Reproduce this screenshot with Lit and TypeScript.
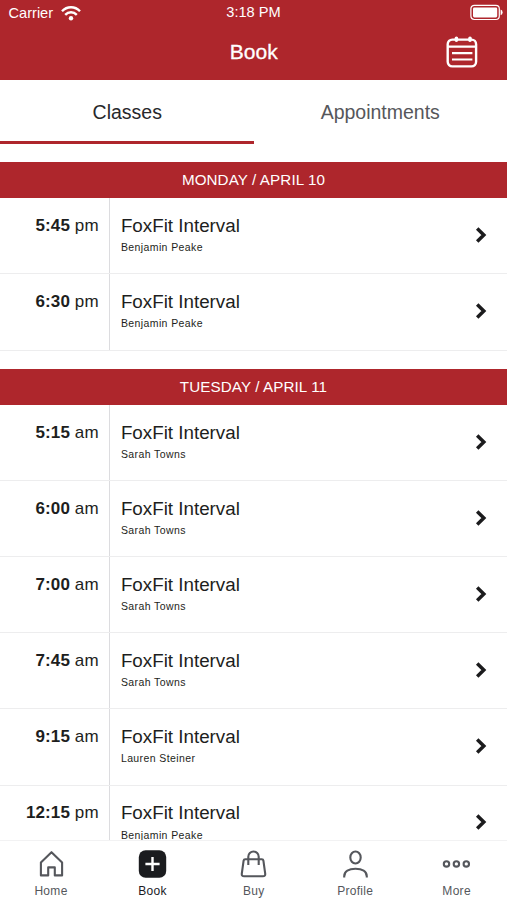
import { LitElement, html, css, svg } from "lit";
import { customElement, property } from "lit/decorators.js";
import { classMap } from "lit/directives/class-map.js";

interface Session {
  time: string;
  period: "am" | "pm";
  name: string;
  instructor: string;
}

interface Day {
  label: string;
  sessions: Session[];
}

const session = (time: string, period: "am" | "pm", instructor: string): Session => ({
  time,
  period,
  name: "FoxFit Interval",
  instructor,
});

const DAYS: Day[] = [
  {
    label: "MONDAY / APRIL 10",
    sessions: [session("5:45", "pm", "Benjamin Peake"), session("6:30", "pm", "Benjamin Peake")],
  },
  {
    label: "TUESDAY / APRIL 11",
    sessions: [
      session("5:15", "am", "Sarah Towns"),
      session("6:00", "am", "Sarah Towns"),
      session("7:00", "am", "Sarah Towns"),
      session("7:45", "am", "Sarah Towns"),
      session("9:15", "am", "Lauren Steiner"),
      session("12:15", "pm", "Benjamin Peake"),
    ],
  },
];

const NAV_ICONS = {
  Home: svg`<path d="M4.9 12.4 15.5 2.2 26.1 12.4V25.4H18.8V17.4H12.2V25.4H4.9Z"/>`,
  Book: svg`<rect x="1.8" y="0.3" width="27.4" height="27.4" rx="6.8" fill="#1b1c1f" stroke="none"/>
    <path d="M15.5 6.9V21.1M8.4 14H22.6" stroke="#fff" stroke-width="2.4"/>`,
  Buy: svg`<path d="M7.2 9.2H23.8Q25.2 9.2 25.4 10.6L27.2 23.6Q27.5 26.3 24.9 26.3H6.1Q3.5 26.3 3.8 23.6L5.6 10.6Q5.8 9.2 7.2 9.2Z"/>
    <path d="M10.3 15V6.7a5.2 5.2 0 0 1 10.4 0V15"/>`,
  Profile: svg`<ellipse cx="15.5" cy="7.5" rx="5.2" ry="6"/>
    <path d="M4.2 27.4V26.4C4.2 21.4 8.9 18.8 15.5 18.8S26.8 21.4 26.8 26.4V27.4"/>`,
  More: svg`<circle cx="5.5" cy="13.9" r="2.7"/><circle cx="15.4" cy="13.9" r="2.7"/><circle cx="25.3" cy="13.9" r="2.7"/>`,
};

type NavName = keyof typeof NAV_ICONS;

@customElement("session-row")
class SessionRow extends LitElement {
  @property({ attribute: false }) session!: Session;

  static styles = css`
    :host {
      display: flex;
      box-sizing: border-box;
      height: 76.15px;
      border-bottom: 1px solid #ededee;
      color: #1d1e20;
    }
    .time {
      box-sizing: border-box;
      width: 110px;
      padding: 16.8px 10.3px 0 0;
      border-right: 1px solid #dcdcdf;
      text-align: right;
      font-size: 17px;
      line-height: 22px;
      letter-spacing: 0.12px;
      white-space: nowrap;
    }
    .details {
      flex: 1;
      padding: 16.8px 0 0 10.9px;
    }
    .name {
      font-size: 18.8px;
      line-height: 22px;
    }
    .instructor {
      margin-top: 4.2px;
      font-size: 10.5px;
      line-height: 13px;
      letter-spacing: 0.4px;
    }
    .chevron {
      align-self: center;
      width: 12px;
      height: 18px;
      margin: 0 20.5px 1.9px 0;
      fill: none;
      stroke: #1b1b1d;
      stroke-width: 3.5;
    }
  `;

  render() {
    const { time, period, name, instructor } = this.session;
    return html`
      <div class="time"><b>${time}</b> ${period}</div>
      <div class="details">
        <div class="name">${name}</div>
        <div class="instructor">${instructor}</div>
      </div>
      <svg class="chevron" viewBox="0 0 12 18"><path d="M2.2 2.6 8.8 9 2.2 15.4" /></svg>
    `;
  }
}

@customElement("nav-item")
class NavItem extends LitElement {
  @property() name: NavName = "Home";
  @property({ type: Boolean }) active = false;

  static styles = css`
    :host {
      flex: 1;
    }
    .item {
      display: flex;
      flex-direction: column;
      align-items: center;
      padding: 9px 0 0 0.6px;
      color: #55575c;
      font-size: 12px;
      line-height: 14px;
      letter-spacing: 0.3px;
    }
    .active {
      color: #1b1c1f;
    }
    .icon {
      width: 31px;
      height: 28px;
      margin-bottom: 6px;
      fill: none;
      stroke: #55575c;
      stroke-width: 2.1;
      stroke-linejoin: round;
      overflow: visible;
    }
  `;

  render() {
    return html`<div class=${classMap({ item: true, active: this.active })}>
      <svg class="icon" viewBox="0 0 31 28">${NAV_ICONS[this.name]}</svg>
      <span>${this.name}</span>
    </div>`;
  }
}

@customElement("app-root")
class AppRoot extends LitElement {
  static styles = css`
    :host {
      display: flex;
      flex-direction: column;
      height: 900px;
      overflow: hidden;
      background: #fff;
      font-family: "Liberation Sans", Arial, sans-serif;
    }
    .header {
      flex: none;
      height: 80px;
      background: #ae262c;
      color: #fff;
    }
    .status,
    .titlebar {
      display: grid;
      grid-template-columns: 1fr auto 1fr;
      align-items: center;
    }
    .status {
      height: 25px;
      font-size: 14.6px;
      line-height: 17px;
    }
    .carrier {
      display: flex;
      align-items: center;
      gap: 7.5px;
      padding: 1px 0 0 8.5px;
    }
    .wifi {
      width: 20px;
      height: 16px;
      fill: none;
      stroke: #fff;
      stroke-width: 2.4;
    }
    .battery {
      justify-self: end;
      width: 33px;
      height: 17px;
      margin-right: 4.3px;
    }
    .titlebar {
      height: 55px;
    }
    .title {
      grid-column: 2;
      margin: -2px 0 0 0.6px;
      font-size: 21px;
      line-height: 24px;
      -webkit-text-stroke: 0.3px #fff;
    }
    .calendar {
      justify-self: end;
      width: 32px;
      height: 32px;
      margin: -1px 29.3px 0 0;
      fill: none;
      stroke: #fff;
      stroke-width: 2.4;
    }
    .tabs {
      flex: none;
      display: grid;
      grid-template-columns: 1fr 1fr;
      height: 64px;
      color: #56575b;
      font-size: 19.5px;
      line-height: 64px;
      text-align: center;
    }
    .tab {
      box-sizing: border-box;
      height: 64px;
      border-bottom: 3.5px solid transparent;
    }
    .selected {
      padding-left: 1px;
      border-color: #ae262c;
      color: #27282b;
    }
    .schedule {
      flex: 1;
      min-height: 0;
      overflow: hidden;
    }
    .day {
      margin-top: 18.3px;
    }
    .day-label {
      height: 36px;
      background: #ae262c;
      color: #fff;
      font-size: 15.2px;
      line-height: 36px;
      letter-spacing: 0.1px;
      text-align: center;
    }
    .nav {
      flex: none;
      display: flex;
      box-sizing: border-box;
      height: 60px;
      border-top: 1px solid #f2f2f3;
      background: #fff;
    }
  `;

  render() {
    return html`
      <header class="header">
        <div class="status">
          <div class="carrier">
            <span>Carrier</span>
            <svg class="wifi" viewBox="0 0 20 16">
              <path d="M1 6.2C6 0.9 14 0.9 19 6.2M4.2 9.8C7.5 6.4 12.5 6.4 15.8 9.8" />
              <circle cx="10" cy="13.2" r="2.2" fill="#fff" stroke="none" />
            </svg>
          </div>
          <div>3:18 PM</div>
          <svg class="battery" viewBox="0 0 33 17">
            <rect x="0.9" y="1.3" width="28.4" height="14.2" rx="3.4" fill="none" stroke="#fff" stroke-width="1.2" />
            <rect x="3" y="3.4" width="24.2" height="10" rx="1.4" fill="#fff" />
            <path d="M30.6 5.6Q32.6 6.4 32.6 8.4T30.6 11.2Z" fill="#fff" />
          </svg>
        </div>
        <div class="titlebar">
          <div class="title">Book</div>
          <svg class="calendar" viewBox="0 0 32 32">
            <rect x="1.7" y="3.6" width="28.4" height="26.8" rx="4.6" />
            <path d="M2 10.7H30M6 17.2H26.4M6 23.5H26.4" stroke-width="2.2" />
            <path d="M10.4 2.2V4.2M24 2.2V4.2" stroke-width="3.6" stroke-linecap="round" />
          </svg>
        </div>
      </header>
      <div class="tabs">
        <div class="tab selected">Classes</div>
        <div class="tab">Appointments</div>
      </div>
      <main class="schedule">
        ${DAYS.map(
          (day) => html`<section class="day">
            <div class="day-label">${day.label}</div>
            ${day.sessions.map((s) => html`<session-row .session=${s}></session-row>`)}
          </section>`
        )}
      </main>
      <nav class="nav">
        ${(Object.keys(NAV_ICONS) as NavName[]).map(
          (name) => html`<nav-item name=${name} ?active=${name === "Book"}></nav-item>`
        )}
      </nav>
    `;
  }
}
